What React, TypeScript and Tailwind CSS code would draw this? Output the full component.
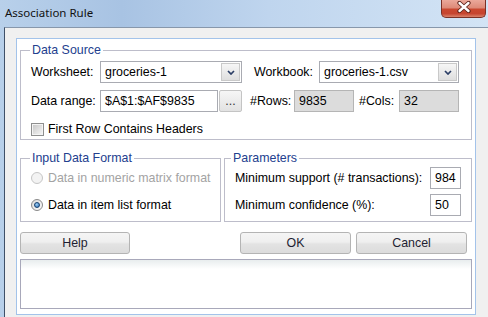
import type { ReactNode } from "react";

// Barre de titre façon Windows 7
function TitleBar() {
  return (
    <div className="h-[27px] shrink-0 flex items-start">
      <span className="ml-[5px] mt-[5px] leading-[15px] font-['Noto_Sans',sans-serif] text-[11.5px] text-[#111]">
        Association Rule
      </span>
      <div className="ml-auto mr-[2px] w-[45px] h-[18px] rounded-b-[5px] border border-t-0 border-[#7b3126] bg-[linear-gradient(#eba89a_0%,#de8b79_45%,#c9472f_55%,#c64530_80%,#d9836c_100%)] flex justify-center">
        <svg width="14" height="12" viewBox="0 0 14 12" className="mt-[1px]">
          <path d="M2.5 2 L11.5 10 M11.5 2 L2.5 10" stroke="#5b2118" strokeWidth="4.2" strokeLinecap="round" />
          <path d="M2.5 2 L11.5 10 M11.5 2 L2.5 10" stroke="#ffffff" strokeWidth="2.4" strokeLinecap="round" />
        </svg>
      </div>
    </div>
  );
}

function Group({
  title,
  className,
  legendClass = "-ml-[1px]",
  children,
}: {
  title: string;
  className?: string;
  legendClass?: string;
  children: ReactNode;
}) {
  return (
    <fieldset className={`min-w-0 border border-[#bdbdca] pl-[10px] ${className ?? ""}`}>
      <legend className={`px-[2px] leading-[15px] text-[#23408e] ${legendClass}`}>{title}</legend>
      {children}
    </fieldset>
  );
}

function Combo({ width, value }: { width: string; value: string }) {
  return (
    <div className={`${width} h-full flex bg-white border border-[#a9abb2]`}>
      <span className="flex-1 pl-[4px] flex items-center">{value}</span>
      <div className="w-[19px] m-[1px] ml-0 border border-[#c9c9c9] bg-[linear-gradient(#f6f6f6,#dedede)] flex items-center justify-center">
        <svg width="8" height="5" viewBox="0 0 8 5">
          <path d="M1 1 L4 4 L7 1" stroke="#2b3e66" strokeWidth="1.7" fill="none" />
        </svg>
      </div>
    </div>
  );
}

function ReadOnlyField({ value }: { value: string }) {
  return (
    <div className="w-[60px] h-full bg-[#dcdcdc] border border-[#b5b5b5] pl-[4px] flex items-center">
      {value}
    </div>
  );
}

function Radio({ checked, disabled }: { checked?: boolean; disabled?: boolean }) {
  if (disabled) {
    return <div className="shrink-0 w-[12px] h-[12px] rounded-full border border-[#c6c6c6] bg-[#f3f3f3]" />;
  }
  return (
    <div className="shrink-0 w-[12px] h-[12px] rounded-full border border-[#8a8a8a] bg-[linear-gradient(135deg,#dcdcdc,#fafafa)] flex items-center justify-center">
      {checked && (
        <div className="w-[6px] h-[6px] rounded-full border border-[#16406f] bg-[radial-gradient(circle_at_40%_35%,#9fd0f4,#2a6db5)]" />
      )}
    </div>
  );
}

function WinButton({ label, width }: { label: string; width: string }) {
  return (
    <div
      className={`${width} h-[22px] rounded-[3px] border border-[#b4b4b4] bg-[linear-gradient(#f5f5f5_0%,#efefef_45%,#e3e3e3_55%,#dcdcdc_100%)] flex items-center justify-center text-[#1e1e32]`}
    >
      {label}
    </div>
  );
}

export default function App() {
  return (
    <div className="w-[488px] h-[317px] overflow-hidden flex flex-col whitespace-nowrap bg-[linear-gradient(90deg,#b8d0ea_0%,#a8c3e3_25%,#bfd5ee_55%,#d3e4f5_100%)] font-['Liberation_Sans',sans-serif] text-[12.4px] text-black">
      <TitleBar />

      <div className="flex flex-1">
        <div className="w-[4px] shrink-0" />
        <div className="flex-1 bg-[#f0f0f0] border-l border-t border-l-[#3f5068] border-t-[#8797ab] pl-[11px] pt-[10px]">
          <div className="w-[460px] h-[277px] bg-white border border-[#a3c3ea] px-[3px] pt-[4px] flex flex-col">
            {/* Source des données */}
            <Group title="Data Source" className="pt-[3px] pb-[2px]">
              <div className="flex items-center h-[22px]">
                <span className="w-[69px]">Worksheet:</span>
                <Combo width="w-[142px]" value="groceries-1" />
                <span className="ml-[12px] w-[65px]">Workbook:</span>
                <Combo width="w-[140px]" value="groceries-1.csv" />
              </div>

              <div className="flex items-center h-[22px] mt-[7px]">
                <span className="w-[69px]">Data range:</span>
                <div className="w-[118px] h-full bg-white border border-[#a9abb2] pl-[4px] flex items-center">
                  $A$1:$AF$9835
                </div>
                <div className="ml-[1px] w-[23px] h-full border border-[#c4c4c4] rounded-[2px] bg-[linear-gradient(#f6f6f6,#e2e2e2)] flex items-end justify-center pb-[4px] leading-none text-[#333]">
                  ...
                </div>
                <span className="ml-[8px] w-[44px]">#Rows:</span>
                <ReadOnlyField value="9835" />
                <span className="ml-[5px] w-[40px]">#Cols:</span>
                <ReadOnlyField value="32" />
              </div>

              <div className="flex items-center h-[15px] mt-[10px]">
                <div className="w-[13px] h-[13px] border border-[#8e8f8f] bg-[#f4f4f4] p-[1px]">
                  <div className="w-full h-full bg-[linear-gradient(135deg,#c9c9c9,#f3f3f3)]" />
                </div>
                <span className="ml-[4px]">First Row Contains Headers</span>
              </div>
            </Group>

            <div className="flex gap-[3px] mt-[11px]">
              {/* Format d'entrée */}
              <Group title="Input Data Format" className="w-[201px] shrink-0 pt-[1px] pb-[5px]">
                <div className="flex items-center h-[22px]">
                  <Radio disabled />
                  <span className="ml-[5px] text-[#a3a3a3]">Data in numeric matrix format</span>
                </div>
                <div className="flex items-center h-[22px] mt-[5px]">
                  <Radio checked />
                  <span className="ml-[5px]">Data in item list format</span>
                </div>
              </Group>

              {/* Paramètres */}
              <Group title="Parameters" legendClass="-ml-[4px]" className="flex-1 pt-[1px] pb-[5px] pr-[10px]">
                <div className="flex items-center justify-between h-[22px]">
                  <span>Minimum support (# transactions):</span>
                  <div className="w-[31px] h-full border border-[#a9abb2] pl-[4px] flex items-center">984</div>
                </div>
                <div className="flex items-center justify-between h-[22px] mt-[5px]">
                  <span>Minimum confidence (%):</span>
                  <div className="w-[31px] h-full border border-[#a9abb2] pl-[4px] flex items-center">50</div>
                </div>
              </Group>
            </div>

            {/* Boutons */}
            <div className="flex mt-[10px]">
              <WinButton label="Help" width="w-[110px]" />
              <div className="ml-[110px]">
                <WinButton label="OK" width="w-[111px]" />
              </div>
              <div className="ml-[5px]">
                <WinButton label="Cancel" width="w-[111px]" />
              </div>
            </div>

            {/* Zone de messages */}
            <div className="mt-[5px] h-[50px] border border-[#a8a8ba] bg-[linear-gradient(#e8edee,#ffffff_9px)]" />
          </div>
        </div>
      </div>
    </div>
  );
}
